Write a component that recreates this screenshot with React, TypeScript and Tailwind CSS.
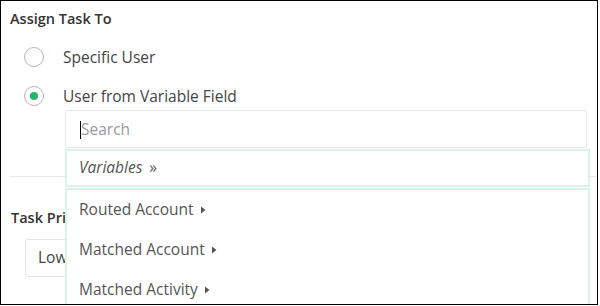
import React from 'react';

const Caret = () => (
  <svg width="5" height="8" viewBox="0 0 5 8" className="ml-[7px] inline-block">
    <path d="M0 0.5 L4.5 4 L0 7.5 Z" fill="#555" />
  </svg>
);

const Radio = ({ checked, label }: { checked?: boolean; label: string }) => (
  <div className="flex items-center h-[28px]">
    <span className="ml-[14px] w-[20px] h-[20px] rounded-full border border-[#b5b5b5] bg-white flex items-center justify-center">
      {checked && <span className="w-[8px] h-[8px] rounded-full bg-[#2bb36a]" />}
    </span>
    <span className="ml-[19px] mt-[2px] text-[15.5px] text-[#444]">{label}</span>
  </div>
);

const App = () => {
  const items = ['Routed Account', 'Matched Account', 'Matched Activity'];

  return (
    <div className="relative w-[598px] h-[305px] overflow-hidden border border-black bg-white font-['Open_Sans',sans-serif]">
      {/* Assign section */}
      <div className="pl-[9px] pt-[9px]">
        <div className="text-[14.5px] leading-[18px] font-semibold text-[#333]">Assign Task To</div>
        <div className="mt-[15px] flex flex-col gap-[11px]">
          <Radio label="Specific User" />
          <Radio checked label="User from Variable Field" />
        </div>
        <div className="ml-[55px] mr-[10px] h-[38px] border border-[#e6e6e6] rounded-[2px] flex items-center pl-[14px] pt-[1px]">
          <span className="w-px h-[18px] bg-black" />
          <span className="text-[15.5px] text-[#9a9a9a]">Search</span>
        </div>
      </div>

      {/* Divider */}
      <div className="ml-[9px] mt-[28px] border-t border-[#e8e8e8]" />

      {/* Task priority, partly under the dropdown */}
      <div className="pl-[10px] pt-[32px]">
        <div className="text-[14.5px] leading-[18px] font-semibold text-[#333]">Task Priority</div>
        <div className="ml-[14px] mt-[12px] w-[200px] h-[38px] border border-[#e3e3e3] rounded-[3px] flex items-center pl-[12px] text-[15.5px] text-[#444]">
          Low
        </div>
      </div>

      {/* Dropdown */}
      <div className="absolute left-[64px] top-[148px] w-[525px] bg-white">
        <div className="h-[38px] border-2 border-[#dcf3e7] flex items-center pl-[12px] text-[15.5px] italic text-[#555]">
          Variables <span className="ml-[7px] not-italic">»</span>
        </div>
        <div className="mt-px h-[130px] border-x-2 border-t-2 border-[#dcf3e7]">
          {items.map((item) => (
            <div key={item} className="h-[40px] flex items-center pl-[12px] text-[15.5px] text-[#555]">
              {item}
              <Caret />
            </div>
          ))}
        </div>
      </div>
    </div>
  );
};

export default App;
